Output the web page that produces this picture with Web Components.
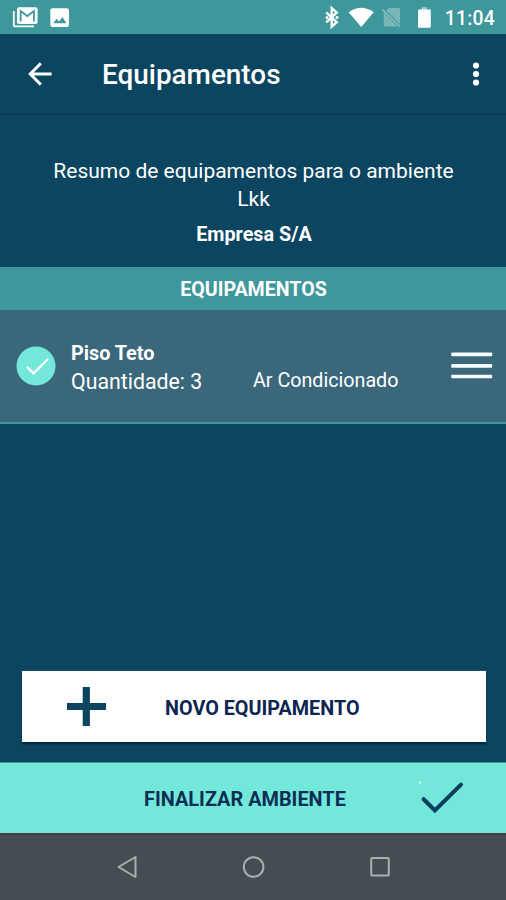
<!DOCTYPE html>
<html lang="pt-BR">
<head>
<meta charset="utf-8">
<title>Equipamentos</title>
<style>
html, body { margin: 0; height: 100%; }
body { font-family: Roboto, "Liberation Sans", sans-serif; color: #fff; background: #0c455f; overflow: hidden; }
</style>
</head>
<body>
<equip-screen></equip-screen>
<script>
const define = (name, html) => {
  const tpl = document.createElement('template');
  tpl.innerHTML = html;
  customElements.define(name, class extends HTMLElement {
    constructor() {
      super();
      this.attachShadow({ mode: 'open' }).append(tpl.content.cloneNode(true));
    }
  });
};

define('status-bar', `
<style>
:host { display: flex; box-sizing: border-box; height: 34px; background: #3e979b; align-items: center; }
svg { display: block; flex: none; }
.time { margin-left: auto; padding-right: 11px; font-size: 19.3px; font-weight: 500; line-height: 34px; letter-spacing: .25px; padding-top: 3px; }
</style>
<svg width="440" height="34" viewBox="0 0 440 34" fill="#fff">
  <path d="M13.8 11v14.2q0 1.2 1.2 1.2h19" fill="none" stroke="#fff" stroke-width="1.8"/>
  <rect x="17" y="7.3" width="20.6" height="16.6" rx="2"/>
  <path d="M20.7 21.6V11l6.6 5 6.6-5v10.6" fill="none" stroke="#3e979b" stroke-width="1.8"/>
  <rect x="50.3" y="8.2" width="18.7" height="18.7" rx="2.2"/>
  <path d="M53.3 23.2l3.3-4.5 2.5 2.9 3.3-4.6 4 6.2z" fill="#3e979b"/>
  <path d="M326.2 12.4l10.5 9.8-5 4.4V8.2l5 4.4-10.5 9.8" fill="none" stroke="#fff" stroke-width="2.4"/>
  <circle cx="327" cy="17.4" r="1.5"/><circle cx="337" cy="17.4" r="1.5"/>
  <path d="M348.7 12.3Q361.2 3 373.7 12.3L361.2 27z"/>
  <path d="M388.5 8h9.8q1.7 0 1.7 1.7v14.5L386.2 10.4zM383.7 12.4l13.9 14.2h-12.3q-1.6 0-1.6-1.6z" opacity=".3"/>
  <path d="M382.3 9.4l17.5 17.2" stroke="#fff" stroke-width="1.4" opacity=".42"/>
  <rect x="421.6" y="7.2" width="5.4" height="3" opacity=".5"/>
  <rect x="418" y="9.4" width="12.8" height="18.4" rx="1"/>
</svg>
<span class="time"><slot></slot></span>`);

define('app-bar', `
<style>
:host { display: flex; box-sizing: border-box; height: 81px; align-items: center; padding: 0 26px 0 28px; border-bottom: 2px solid #093b53; }
svg { display: block; flex: none; }
h1 { margin: 3px auto 0 50px; font-size: 27.9px; font-weight: 500; line-height: 36px; }
</style>
<svg width="24" height="26" viewBox="0 0 24 26"><path d="M23.6 13H2.6M12.8 2.4L2.2 13l10.6 10.6" fill="none" stroke="#fff" stroke-width="2.9"/></svg>
<h1><slot></slot></h1>
<svg width="8" height="26" viewBox="0 0 8 26" fill="#fff"><circle cx="4" cy="4.5" r="3.1"/><circle cx="4" cy="13" r="3.1"/><circle cx="4" cy="21.5" r="3.1"/></svg>`);

define('room-summary', `
<style>
:host { display: block; box-sizing: border-box; height: 152px; padding: 42px 39px 0 40px; text-align: center; }
p { margin: 0; font-size: 21px; line-height: 28px; }
.company { margin: 8px 0 0 1px; font-size: 19.8px; font-weight: 700; }
</style>
<p><slot></slot></p>
<p class="company"><slot name="company"></slot></p>`);

define('section-title', `
<style>
:host { display: block; height: 43px; line-height: 46px; background: #3e979b; text-align: center; font-size: 19.6px; font-weight: 700; padding-left: 1px; }
</style>
<slot></slot>`);

define('equip-item', `
<style>
:host { display: grid; box-sizing: border-box; height: 114px; padding: 0 13px 0 16px; grid-template-columns: 40px 183px 1fr 42px; align-items: center; background: #3b677b; border-bottom: 2px solid #3e979b; font-size: 20px; }
svg { display: block; }
.main { padding: 3px 0 0 15px; line-height: 28px; }
.name { font-weight: 700; font-size: 19.8px; }
.qty { font-size: 21.3px; }
.kind { padding: 29px 0 0 14px; line-height: 28px; font-size: 19.7px; white-space: nowrap; }
</style>
<svg width="40" height="40" viewBox="0 0 40 40"><circle cx="20" cy="20" r="19.5" fill="#73e8da"/><path d="M11.5 21.3l6 6 14-13.8" fill="none" stroke="#fff" stroke-width="2.4" stroke-linecap="round"/></svg>
<div class="main"><div class="name"><slot name="name"></slot></div><div class="qty"><slot name="qty"></slot></div></div>
<div class="kind"><slot name="kind"></slot></div>
<svg width="42" height="28" viewBox="0 0 42 28" fill="#f2fbfd"><rect x=".2" y=".4" width="41" height="3.8" rx="1"/><rect x=".2" y="11.9" width="41" height="3.8" rx="1"/><rect x=".2" y="22.8" width="41" height="3.4" rx="1"/></svg>`);

define('new-button', `
<style>
:host { display: flex; box-sizing: border-box; height: 71px; margin: 0 20px 20px 22px; padding: 1px 0 0 45px; align-items: center; background: #fff; color: #0b2550; font-size: 19.8px; font-weight: 700; box-shadow: 0 2px 2px #041f42, 0 0 1px #77869e; }
svg { display: block; margin: -1px 59px 0 0; }
span { padding-top: 2px; }
</style>
<svg width="39" height="39" viewBox="0 0 39 39"><path d="M19.3 0v39M0 19.5h39" stroke="#0c455f" stroke-width="7.2"/></svg>
<span><slot></slot></span>`);

define('finish-button', `
<style>
:host { display: flex; box-sizing: border-box; height: 71px; padding: 1px 42px 0 144px; align-items: center; justify-content: space-between; background: #73e8da; color: #0a2e54; border-top: 1px solid #3f959f; font-size: 19.9px; font-weight: 700; }
svg { display: block; margin-top: -2px; }
span { padding-top: 2px; }
</style>
<span><slot></slot></span>
<svg width="46" height="38" viewBox="0 0 46 38"><path d="M5.6 20.2l11.3 11.2L43 5.6" fill="none" stroke="#0b3f60" stroke-width="4.1" stroke-linecap="round"/><circle cx="2" cy="3.5" r="1.4" fill="#bdf6ec"/></svg>`);

define('nav-bar', `
<style>
:host { display: flex; box-sizing: border-box; height: 67px; padding: 0 114px 1px 115px; align-items: center; justify-content: space-between; background: #454d52; border-top: 2px solid #493d43; }
svg { display: block; fill: none; stroke: #a9aeb0; stroke-width: 2; }
</style>
<svg width="24" height="24" viewBox="0 0 24 24"><path d="M20.5 2v20L3.5 12z" stroke-linejoin="round"/></svg>
<svg width="24" height="24" viewBox="0 0 24 24"><circle cx="11.6" cy="12" r="9.8"/></svg>
<svg width="24" height="24" viewBox="0 0 24 24"><rect x="3.2" y="3" width="17.6" height="17.6" rx="1"/></svg>`);

define('equip-screen', `
<style>
:host { display: flex; flex-direction: column; height: 900px; width: 506px; background: #0c455f; }
.space { flex: 1; }
</style>
<status-bar>11:04</status-bar>
<app-bar>Equipamentos</app-bar>
<room-summary>Resumo de equipamentos para o ambiente Lkk<span slot="company">Empresa S/A</span></room-summary>
<section-title>EQUIPAMENTOS</section-title>
<equip-item><span slot="name">Piso Teto</span><span slot="qty">Quantidade: 3</span><span slot="kind">Ar Condicionado</span></equip-item>
<div class="space"></div>
<new-button>NOVO EQUIPAMENTO</new-button>
<finish-button>FINALIZAR AMBIENTE</finish-button>
<nav-bar></nav-bar>`);
</script>
</body>
</html>
